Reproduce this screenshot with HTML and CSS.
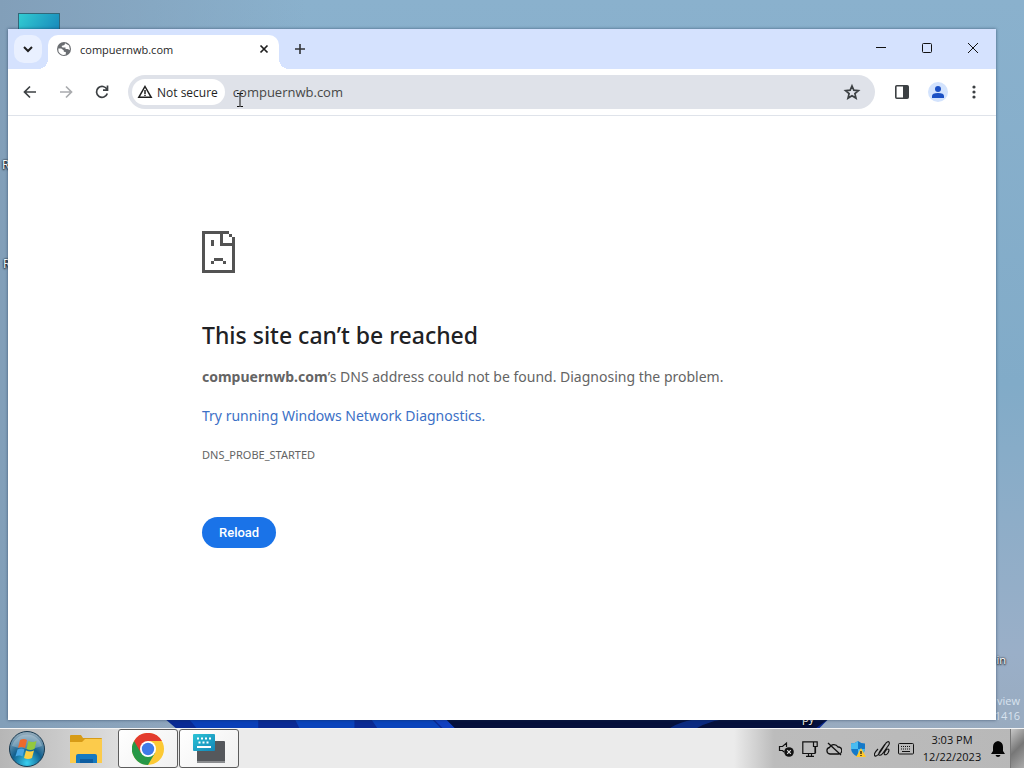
FILE: index.html
```html
<!DOCTYPE html>
<html lang="en">
<head>
  <meta charset="UTF-8">
  <meta name="viewport" content="width=device-width, initial-scale=1">
  <title>compuernwb.com</title>
  <link rel="stylesheet" href="styles.css">
</head>
<body>
  <div class="desktop">
    <div class="desktop-icon"></div>
    <span class="desktop-label label-one">R</span>
    <span class="desktop-label label-two">R</span>
    <span class="desktop-label label-bin">in</span>
    <span class="desktop-label label-py">py</span>
    <div class="watermark">view<br>1416</div>
    <svg class="bloom" viewBox="0 0 664 12" preserveAspectRatio="none">
      <path d="M0 0h664l-12 12H14z" fill="#0a2a94"/>
      <path d="M24 0h70v12H34z" fill="#0a3fb8"/>
      <path d="M130 0h60v12h-54zM206 0h60l12 12H214z" fill="#0a43bb"/>
      <path d="M268 0h34l14 12H280z" fill="#1140c0"/>
      <path d="M280 0h384l-16 12H292z" fill="#05103c"/>
      <path d="M528 12q20-12 44-12h-24q-30 0-46 12z" fill="#0b2a80"/>
    </svg>

    <div class="window">
      <header class="tab-strip">
        <button class="tab-search" aria-label="Search tabs">
          <svg width="10" height="10" viewBox="0 0 10 10"><path d="M1 3l4 4 4-4" fill="none" stroke="#1f1f1f" stroke-width="2"/></svg>
        </button>
        <div class="tab">
          <svg width="16" height="16" viewBox="0 0 16 16">
            <circle cx="8" cy="8" r="7" fill="#6a6d71"/>
            <path d="M2.300 7.500h3l2.500 2v1.300l2 .2v2.600Q5 15 2.500 10.500zM9 2.300l4 2.200 1 4.500-2.500-1H9.500V6.500h-3L5.500 5l3-1z" fill="#fff"/>
          </svg>
          <span class="tab-title">compuernwb.com</span>
          <button class="tab-close" aria-label="Close tab">
            <svg width="10" height="10" viewBox="0 0 10 10"><path d="M1.500 1.500l7 7M8.500 1.500l-7 7" stroke="#1f1f1f" stroke-width="1.700"/></svg>
          </button>
        </div>
        <button class="new-tab" aria-label="New tab">
          <svg width="12" height="12" viewBox="0 0 12 12"><path d="M6 1v10M1 6h10" stroke="#303236" stroke-width="1.600"/></svg>
        </button>
        <div class="window-controls">
          <button aria-label="Minimize"><svg width="12" height="12" viewBox="0 0 12 12"><path d="M1 5.500h10" stroke="#111"/></svg></button>
          <button aria-label="Maximize"><svg width="12" height="12" viewBox="0 0 12 12"><rect x="1.500" y="1.500" width="9" height="9" rx="1" fill="none" stroke="#111"/></svg></button>
          <button aria-label="Close"><svg width="12" height="12" viewBox="0 0 12 12"><path d="M1 1l10 10M11 1L1 11" stroke="#111"/></svg></button>
        </div>
      </header>

      <nav class="toolbar">
        <button class="tool" aria-label="Back"><svg width="16" height="16" viewBox="0 0 16 16"><path d="M14 8H3M8 2.500L2.500 8 8 13.500" fill="none" stroke="#3c4043" stroke-width="1.700"/></svg></button>
        <button class="tool" aria-label="Forward" disabled><svg width="16" height="16" viewBox="0 0 16 16"><path d="M2 8h11M8 2.500L13.500 8 8 13.500" fill="none" stroke="#a9abae" stroke-width="1.700"/></svg></button>
        <button class="tool" aria-label="Reload page"><svg width="16" height="16" viewBox="0 0 16 16"><path d="M13 5.500A5.500 5.500 0 1 0 13.300 9.500M13.500 1.500v4.700H9" fill="none" stroke="#3c4043" stroke-width="1.700"/></svg></button>
        <div class="omnibox">
          <button class="security">
            <svg width="16" height="16" viewBox="0 0 16 16"><path d="M8 2.500L14.200 13.300H1.800z" fill="none" stroke="#1f1f1f" stroke-width="1.500"/><path d="M8 6v4M8 10.700v1.400" stroke="#1f1f1f" stroke-width="1.500"/></svg>
            Not secure
          </button>
          <input class="address" type="text" value="compuernwb.com" aria-label="Address">
          <button class="star" aria-label="Bookmark this tab"><svg width="18" height="18" viewBox="0 0 18 18"><path d="M9 3l1.800 4.200 4.600.4-3.500 3 1.100 4.500L9 12.700l-4 2.400 1.100-4.500-3.500-3 4.600-.4z" fill="none" stroke="#3c4043" stroke-width="1.700"/></svg></button>
          <svg class="cursor" width="8" height="14" viewBox="0 0 8 14"><path d="M1 .5h2.500L4 1l.5-.5H7M4 1v12M1 13.500h2.500L4 13l.5.500H7" fill="none" stroke="#111"/></svg>
        </div>
        <button class="tool" aria-label="Side panel"><svg width="16" height="16" viewBox="0 0 16 16"><rect x="1.800" y="1.800" width="12.400" height="12.400" rx="1" fill="none" stroke="#3c4043" stroke-width="1.600"/><path d="M9 2h5v12H9z" fill="#3c4043"/></svg></button>
        <button class="tool" aria-label="Profile"><svg width="20" height="20" viewBox="0 0 20 20"><circle cx="10" cy="10" r="10" fill="#d3e3fd"/><circle cx="10" cy="7" r="3" fill="#1b50c4"/><path d="M4 16v-2q0-3 6-3t6 3v2z" fill="#1b50c4"/></svg></button>
        <button class="tool" aria-label="Menu"><svg width="4" height="16" viewBox="0 0 4 16"><circle cx="2" cy="3" r="1.600" fill="#3c4043"/><circle cx="2" cy="8" r="1.600" fill="#3c4043"/><circle cx="2" cy="13" r="1.600" fill="#3c4043"/></svg></button>
      </nav>

      <main class="page">
        <div class="error">
          <svg class="sad-page" width="33" height="42" viewBox="0 0 11 14" shape-rendering="crispEdges">
            <path d="M0 0h9v1h1v1h1v12H0zM1 1v12h9V5H6V1zM7 1v3h3V2H9V1zM3 3h1v2H3zM4 9h3v1H4zM3 10h1v1H3zM7 10h1v1H7z" fill="#535353" fill-rule="evenodd"/>
          </svg>
          <h1>This site can’t be reached</h1>
          <p><strong>compuernwb.com</strong>’s DNS address could not be found. Diagnosing the problem.</p>
          <p><a href="#">Try running Windows Network Diagnostics.</a></p>
          <div class="error-code">DNS_PROBE_STARTED</div>
          <button class="reload">Reload</button>
        </div>
      </main>
    </div>

    <footer class="taskbar">
      <button class="start" aria-label="Start">
        <svg width="36" height="36" viewBox="0 0 36 36">
          <defs>
            <radialGradient id="orb" cx=".5" cy=".9" r=".85"><stop offset="0" stop-color="#38d0f0"/><stop offset=".5" stop-color="#11608f"/><stop offset="1" stop-color="#8fa9ba"/></radialGradient>
          </defs>
          <circle cx="18" cy="18" r="17.500" fill="url(#orb)" stroke="#19394f"/>
          <path d="M3 15A15.500 15.500 0 0 1 33 15Q18 21 3 15z" fill="#fff" opacity=".25"/>
          <path d="M11 9q4-2 7 0l-2 8q-4-2-7 0z" fill="#ee6a2c"/>
          <path d="M19.500 10q4 2 8 0l-2 8q-4 2-8 0z" fill="#93c83e"/>
          <path d="M8.500 18.500q4-2 7 0l-2 7q-3-2-7 0z" fill="#47a7e5"/>
          <path d="M17 19.500q4 2 8 0l-2 7.500q-4 2-8 0z" fill="#fbd044"/>
        </svg>
      </button>
      <button class="task" aria-label="File Explorer">
        <svg width="34" height="30" viewBox="0 0 34 30">
          <path d="M1 2q0-1 1-1h10l2 3h18q1 0 1 1v24H1z" fill="#d79b16"/>
          <path d="M1 8h12l3-3h17v24H1z" fill="#fccb4b"/>
          <path d="M7 29v-7q0-2 2-2h17q2 0 2 2v7z" fill="#1579c0"/>
          <path d="M11 29v-4h13v4z" fill="#0d5da0"/>
        </svg>
      </button>
      <button class="task open" aria-label="Google Chrome">
        <svg width="32" height="32" viewBox="0 0 32 32">
          <circle cx="16" cy="16" r="16" fill="#fcc934"/>
          <path d="M16 16L2.100 8A16 16 0 0 0 16 32l7-12z" fill="#279847"/>
          <path d="M16 8h13.900A16 16 0 0 0 2.100 8L9 20l7-4z" fill="#e33b2e"/>
          <circle cx="16" cy="16" r="8" fill="#fff"/>
          <circle cx="16" cy="16" r="6.200" fill="#3f7be8"/>
        </svg>
      </button>
      <button class="task open" aria-label="On-screen keyboard">
        <svg width="32" height="30" viewBox="0 0 32 30">
          <defs><linearGradient id="keys" x2="1" y2="1"><stop stop-color="#2cc3d5"/><stop offset="1" stop-color="#1286b8"/></linearGradient></defs>
          <rect x="4" y="7" width="28" height="22" rx="1" fill="#55585c"/>
          <path d="M4 27h28v1q0 1-1 1H5q-1 0-1-1z" fill="#8a8c8f"/>
          <rect width="22" height="17" rx="1" fill="url(#keys)"/>
          <path d="M4 4.500h15M5.500 8.500h12" stroke="#fff" stroke-width="2" stroke-dasharray="2 2"/>
          <path d="M4 13h14" stroke="#fff" stroke-width="2"/>
        </svg>
      </button>
      <div class="tray">
        <svg width="16" height="16" viewBox="0 0 16 16"><path d="M6 11L4.500 9.500H1.500v-4h3L8.500 2v4" fill="none" stroke="#111" stroke-width="1.200"/><circle cx="11" cy="11" r="4.800" fill="#111"/><path d="M9.200 9.200l3.600 3.600M12.800 9.200l-3.600 3.600" stroke="#ddd" stroke-width="1.200"/></svg>
        <svg width="16" height="16" viewBox="0 0 16 16"><path d="M11 .8H.8v11.700H13V6M4 15.300h8M6.500 12.500V15M9.500 12.500V15M11.500.8h3.700v4.700h-3.700zM13.500 5.500V12" fill="none" stroke="#111" stroke-width="1.200"/></svg>
        <svg width="16" height="16" viewBox="0 0 16 16"><path d="M4 13a3.300 3.300 0 0 1-.5-6.500A4.800 4.800 0 0 1 12 6a3.500 3.500 0 0 1 .5 7zM2 2l13 12" fill="none" stroke="#111" stroke-width="1.300"/></svg>
        <svg width="16" height="16" viewBox="0 0 16 16"><path d="M8 0q3 2.500 7 2.500V7q0 6-7 9-7-3-7-9V2.500Q5 2.500 8 0z" fill="#1479c9"/><path d="M8 0v8H1V2.500Q5 2.500 8 0zM8 8h7q-1 5-7 8z" fill="#4abcf1"/><path d="M11 7l5 9H6z" fill="#ffc82c"/><path d="M11 10v3M11 14v1" stroke="#111" stroke-width="1.200"/></svg>
        <svg width="16" height="16" viewBox="0 0 16 16"><path d="M4 8q-5 5-3 7 2 1 6-5l5-8q2-2 3-1 1 2-1 4l-5 7q-2 3-4 2-1-1 1-4l5-7M10 13q2 2 4-1 2-4 0-4t-4 5" fill="none" stroke="#111" stroke-width="1.100"/></svg>
        <svg width="16" height="16" viewBox="0 0 16 16"><rect x=".5" y="2.500" width="15" height="10.500" rx="1" fill="none" stroke="#111"/><path d="M3 5.500h10M3 8h10" stroke="#111" stroke-dasharray="1 1"/><path d="M4 10.500h8" stroke="#111"/></svg>
      </div>
      <div class="clock">3:03 PM<br>12/22/2023</div>
      <svg class="bell" width="14" height="16" viewBox="0 0 14 16"><path d="M7 0q5 1 5 6v4l2 3H0l2-3V6q0-5 5-6zM4.500 14h5Q9 16 7 16t-2.500-2z" fill="#050505"/></svg>
      <button class="show-desktop" aria-label="Show desktop"></button>
    </footer>
  </div>
</body>
</html>
```

FILE: styles.css
```css
* { box-sizing: border-box; }
body { margin: 0; font-family: "Open Sans", "Noto Sans", sans-serif; font-size: 12px; color: #1f1f1f; }
button { border: 0; padding: 0; background: none; font: inherit; color: inherit; display: flex; align-items: center; justify-content: center; }
svg { display: block; flex: none; }

/* desktop */
.desktop { position: relative; min-height: 100vh; display: flex; flex-direction: column; overflow: hidden; background: linear-gradient(90deg, #829fb9 0, transparent 30%), linear-gradient(#8ab1cd, #81abc8 50%, #9aafc8 85%, #98a9bb); }
.desktop-icon { position: absolute; left: 18px; top: 13px; width: 42px; height: 24px; border: 1px solid #326779; background: linear-gradient(120deg, #32cbd2, #1685ba); }
.desktop-label { position: absolute; line-height: 16px; color: #fff; text-shadow: 0 1px 2px #000, 0 0 2px #000; }
.label-one { left: 2px; top: 157px; }
.label-two { left: 3px; top: 256px; }
.label-bin { right: 18px; bottom: 100px; font-size: 11px; }
.label-py { left: 802px; bottom: 42px; font-size: 11px; }
.watermark { position: absolute; right: 4px; bottom: 45px; font-size: 11px; line-height: 15px; text-align: right; color: #d8e3ef; }
.bloom { position: absolute; left: 16%; bottom: 38px; width: 65%; height: 12px; }
.label-py { z-index: 1; }

/* browser window */
.window { position: relative; z-index: 2; flex: 1; margin: 29px 28px 8px 8px; display: flex; flex-direction: column; background: #fff; box-shadow: 0 0 3px rgba(20, 40, 70, 0.6); }
.tab-strip { height: 40px; display: flex; align-items: center; padding-left: 6px; background: #d5e2fe; }
.tab-search { width: 28px; height: 28px; border-radius: 10px; background: #e9f0ff; }
.tab { position: relative; align-self: flex-end; width: 231px; height: 34px; margin-left: 6px; padding: 0 10px 6px 8px; display: flex; align-items: center; gap: 8px; background: #fff; border-radius: 10px 10px 0 0; }
.tab::before, .tab::after { content: ""; position: absolute; bottom: 0; width: 10px; height: 10px; }
.tab::before { left: -10px; background: radial-gradient(circle at 0 0, transparent 10px, #fff 10px); }
.tab::after { right: -10px; background: radial-gradient(circle at 100% 0, transparent 10px, #fff 10px); }
.tab-title { flex: 1; font-size: 11px; }
.new-tab { width: 28px; height: 28px; margin-left: 7px; }
.window-controls { margin-left: auto; display: flex; align-self: stretch; }
.window-controls button { width: 46px; padding-bottom: 2px; }

.toolbar { height: 47px; display: flex; align-items: center; gap: 8px; padding: 0 8px; border-bottom: 1px solid #dfe3ea; }
.tool { width: 28px; height: 28px; }
.omnibox { position: relative; flex: 1; min-width: 0; height: 34px; margin: 0 5px 0 4px; padding: 0 10px 0 4px; display: flex; align-items: center; border-radius: 17px; background: #dfe2e9; }
.security { height: 26px; padding: 0 7px 0 5px; gap: 4px; border-radius: 13px; background: #fff; white-space: nowrap; }
.address { flex: 1; min-width: 0; height: 28px; padding: 0 8px; border: 0; outline: 0; background: none; font: inherit; font-size: 13px; color: #474747; }
.star { width: 26px; height: 28px; }
.cursor { position: absolute; left: 108px; top: 18px; }

/* error page */
.page { flex: 1; padding: 115px 24px 40px; }
.error { max-width: 600px; margin: 0 auto; font-family: "Noto Sans", "Open Sans", sans-serif; font-size: 14px; color: #646464; }
.error h1 { margin: 44px 0 12px; font-size: 23px; line-height: 36px; font-weight: 500; color: #202124; }
.error p { margin: 0 0 15px; line-height: 24px; }
.error a { color: #3c70c6; text-decoration: none; }
.error-code { font-size: 11px; line-height: 24px; }
.reload { height: 31px; margin-top: 50px; padding: 0 17px; border-radius: 16px; background: #1a73e8; color: #fff; font-family: Roboto, sans-serif; font-size: 13px; font-weight: 500; }

/* taskbar */
.taskbar { position: relative; z-index: 2; height: 40px; display: flex; align-items: center; border-top: 1px solid #f4f4f4; background: linear-gradient(90deg, #b6b6b6, #dedede 120px, #ebebeb 200px, #ebebeb calc(100% - 290px), #bcbcbc calc(100% - 250px), #b8b8b8); }
.start { width: 54px; height: 39px; }
.task { width: 60px; height: 39px; margin-right: 1px; border: 1px solid transparent; border-radius: 3px; }
.start + .task { width: 62px; margin-left: 1px; }
.open { border-color: #5c5c5c; background: linear-gradient(135deg, #fff, #f0f0f0); }
.tray { margin-left: auto; display: flex; gap: 8px; }
.clock { width: 76px; padding-bottom: 2px; line-height: 17px; text-align: center; font-size: 11px; color: #111; }
.bell { margin: 0 5px 0 1px; }
.show-desktop { width: 14px; height: 39px; border-left: 1px solid #777; background: linear-gradient(135deg, #c8c8c8, #777 50%, #aaa); }
```
